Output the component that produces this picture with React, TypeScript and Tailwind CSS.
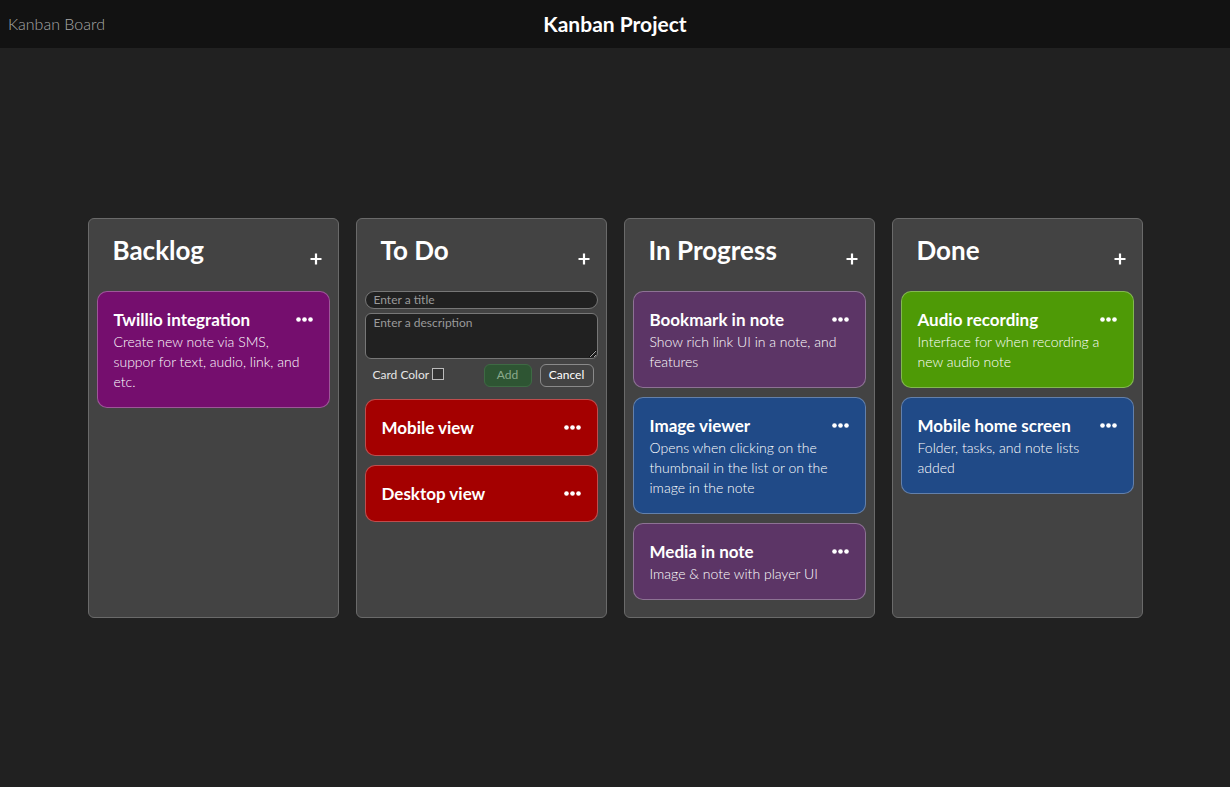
import React from "react";

type Card = {
  title: string;
  desc?: string;
  color: string;
};

type Column = {
  name: string;
  cards: Card[];
  adding?: boolean;
};

const columns: Column[] = [
  {
    name: "Backlog",
    cards: [
      {
        title: "Twillio integration",
        desc: "Create new note via SMS, suppor for text, audio, link, and etc.",
        color: "bg-[#750e6e]",
      },
    ],
  },
  {
    name: "To Do",
    adding: true,
    cards: [
      { title: "Mobile view", color: "bg-[#a40000]" },
      { title: "Desktop view", color: "bg-[#a40000]" },
    ],
  },
  {
    name: "In Progress",
    cards: [
      {
        title: "Bookmark in note",
        desc: "Show rich link UI in a note, and features",
        color: "bg-[#5c3566]",
      },
      {
        title: "Image viewer",
        desc: "Opens when clicking on the thumbnail in the list or on the image in the note",
        color: "bg-[#204a87]",
      },
      {
        title: "Media in note",
        desc: "Image & note with player UI",
        color: "bg-[#5c3566]",
      },
    ],
  },
  {
    name: "Done",
    cards: [
      {
        title: "Audio recording",
        desc: "Interface for when recording a new audio note",
        color: "bg-[#4e9a06]",
      },
      {
        title: "Mobile home screen",
        desc: "Folder, tasks, and note lists added",
        color: "bg-[#204a87]",
      },
    ],
  },
];

const Dots = () => (
  <svg width="17" height="5" viewBox="0 0 17 5" className="flex-shrink-0">
    <circle cx="2.5" cy="2.5" r="2.3" fill="white" />
    <circle cx="8.5" cy="2.5" r="2.3" fill="white" />
    <circle cx="14.5" cy="2.5" r="2.3" fill="white" />
  </svg>
);

const Plus = () => (
  <svg width="12" height="12" viewBox="0 0 12 12">
    <path d="M6 0.5v11M0.5 6h11" stroke="white" strokeWidth="2.2" />
  </svg>
);

const NoteCard = ({ card }: { card: Card }) => (
  <div className={`rounded-[10px] border border-white/30 px-4 py-[15px] ${card.color}`}>
    <div className="flex items-center justify-between gap-2">
      <h4 className="text-[17px] font-bold leading-[25px] text-white">{card.title}</h4>
      <Dots />
    </div>
    {card.desc && (
      <p className="text-sm font-light leading-5 text-white">{card.desc}</p>
    )}
  </div>
);

// inline form shown in the To Do column
const AddForm = () => (
  <div className="flex flex-col pb-[3px]">
    <input
      className="h-[18px] rounded-full border border-[#777] bg-[#212121] px-2 text-xs text-white placeholder:text-[#9a9a9a] outline-none"
      placeholder="Enter a title"
    />
    <textarea
      className="mt-[4px] h-[46px] resize-y rounded-md border border-[#777] bg-[#212121] px-2 py-[1px] text-xs text-white placeholder:text-[#9a9a9a] outline-none"
      placeholder="Enter a description"
    />
    <div className="mt-[5px] flex items-center justify-between pl-2 pr-1">
      <label className="flex items-center gap-[3px] text-xs text-[#e6e6e6]">
        Card Color
        <span className="mb-[3px] inline-block h-3 w-3 border border-[#bbb] bg-[#333]" />
      </label>
      <div className="flex gap-2">
        <button className="h-[23px] w-12 rounded-md border border-[#3e6a44] bg-[#2e5533] text-xs text-[#8aa98c]">
          Add
        </button>
        <button className="h-[23px] w-[54px] rounded-md border border-[#8a8a8a] bg-transparent text-xs text-white">
          Cancel
        </button>
      </div>
    </div>
  </div>
);

export default function App() {
  return (
    <div className="flex h-[787px] flex-col bg-[#212121] font-['Lato','Noto_Sans',sans-serif]">
      <header className="grid h-12 flex-shrink-0 grid-cols-[1fr_auto_1fr] items-center bg-[#121212] px-2">
        <span className="text-base font-light text-[#a8a8a8]">Kanban Board</span>
        <h1 className="text-[21px] font-bold text-white">Kanban Project</h1>
        <span />
      </header>

      <main className="flex flex-1 items-center justify-center gap-[17px]">
        {columns.map((col) => (
          <section
            key={col.name}
            className="flex h-[400px] w-[251px] flex-col rounded-md border border-[#6a6a6a] bg-[#434343]"
          >
            <div className="flex h-[72px] items-start justify-between pl-6 pr-4 pt-[15px]">
              <h3 className="text-[26px] font-bold leading-8 text-white">{col.name}</h3>
              <div className="pt-[19px]">
                <Plus />
              </div>
            </div>
            <div className="flex flex-col gap-[9px] px-2">
              {col.adding && <AddForm />}
              {col.cards.map((c) => (
                <NoteCard key={c.title} card={c} />
              ))}
            </div>
          </section>
        ))}
      </main>
    </div>
  );
}
